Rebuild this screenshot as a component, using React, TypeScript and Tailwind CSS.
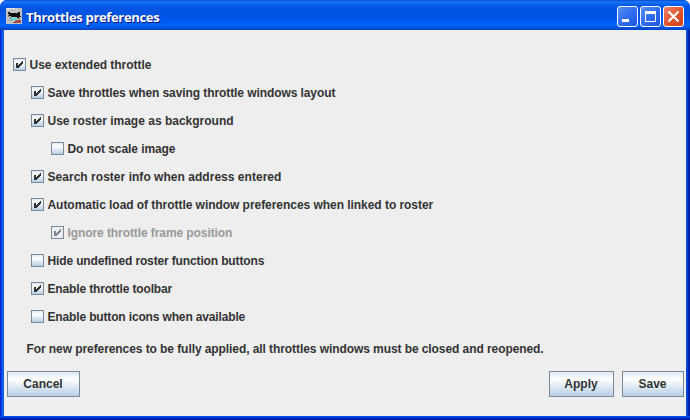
import React from "react";

type Option = {
  label: string;
  checked?: boolean;
  disabled?: boolean;
  indent: string;
  tracking: string;
};

const options: Option[] = [
  { label: "Use extended throttle", checked: true, indent: "pl-[9px]", tracking: "tracking-[-0.04px]" },
  { label: "Save throttles when saving throttle windows layout", checked: true, indent: "pl-[27px]", tracking: "tracking-[-0.085px]" },
  { label: "Use roster image as background", checked: true, indent: "pl-[27px]", tracking: "tracking-[0px]" },
  { label: "Do not scale image", indent: "pl-[47px]", tracking: "tracking-[-0.08px]" },
  { label: "Search roster info when address entered", checked: true, indent: "pl-[27px]", tracking: "tracking-[0.03px]" },
  { label: "Automatic load of throttle window preferences when linked to roster", checked: true, indent: "pl-[27px]", tracking: "tracking-[-0.045px]" },
  { label: "Ignore throttle frame position", checked: true, disabled: true, indent: "pl-[47px]", tracking: "tracking-[-0.085px]" },
  { label: "Hide undefined roster function buttons", indent: "pl-[27px]", tracking: "tracking-[-0.14px]" },
  { label: "Enable throttle toolbar", checked: true, indent: "pl-[27px]", tracking: "tracking-[-0.15px]" },
  { label: "Enable button icons when available", indent: "pl-[27px]", tracking: "tracking-[-0.15px]" },
];

function CheckBox({ checked, disabled }: { checked?: boolean; disabled?: boolean }) {
  return (
    <span
      className={`mt-[7px] block h-[13px] w-[13px] shrink-0 border border-[#7a8a99] ${
        disabled ? "bg-[#eeeeee]" : "bg-linear-to-b from-[#dde8f3] via-white via-30% to-[#b8cfe5]"
      }`}
    >
      {checked && (
        <svg viewBox="0 0 11 11" className="block h-[11px] w-[11px]" shapeRendering="crispEdges" fill={disabled ? "#7a8a99" : "#333333"}>
          <path d="M2 4h2v5H2zM4 6h1v3H4zM5 5h1v3H5zM6 4h1v3H6zM7 3h1v3H7zM8 2h1v3H8z" />
        </svg>
      )}
    </span>
  );
}

function OptionRow({ option }: { option: Option }) {
  return (
    <label className={`flex h-7 gap-[3.5px] ${option.indent}`}>
      <CheckBox checked={option.checked} disabled={option.disabled} />
      <span className={`leading-[28px] whitespace-nowrap ${option.tracking} ${option.disabled ? "text-[#999999]" : ""}`}>
        {option.label}
      </span>
    </label>
  );
}

function PushButton({ label, width }: { label: string; width: string }) {
  return (
    <button
      className={`h-[26px] border border-[#7a8a99] bg-linear-to-b from-[#dde8f3] via-white via-30% to-[#b8cfe5] pr-[1px] text-center leading-[24px] font-bold ${width}`}
    >
      {label}
    </button>
  );
}

function TrainIcon() {
  return (
    <svg viewBox="0 0 16 16" className="h-4 w-4 shrink-0" shapeRendering="crispEdges">
      <path fill="#c4c2c0" d="M0 0h16v16H0z" />
      <path fill="#f4f4f4" d="M1 0h2v2H1zM4 0h2v1H4zM7 0h2v1H7zM10 1h1v1h-1z" />
      <path fill="#111111" d="M2 4h2v1h8V4h2v4h1v1h-2v1h-2V9H5V8H3V6H2z" />
      <path fill="#666666" d="M2 7h1v2H2zM4 9h1v2H4zM12 10h2v1h-2z" />
      <path fill="#54dce4" d="M5 10h6v2H5z" />
      <path fill="#98a6a8" d="M2 12h5v1H2z" />
      <path fill="#b05a55" d="M9 12h6v3H7v-1h2z" />
      <path fill="#7d3030" d="M10 13h1v1h-1zM13 12h1v2h-1zM8 14h2v1H8z" />
    </svg>
  );
}

function WindowButton({ kind }: { kind: "minimize" | "maximize" | "close" }) {
  const fill =
    kind === "close"
      ? "bg-linear-to-br from-[#ec8468] via-[#e2552f] to-[#cc4218]"
      : "bg-linear-to-br from-[#5a8ff4] via-[#316ef0] to-[#1d55dc]";
  return (
    <button aria-label={kind} className={`h-[21px] w-[21px] rounded-[3px] border border-white ${fill}`}>
      <svg viewBox="0 0 19 19" className="block h-[19px] w-[19px]" fill="white">
        {kind === "minimize" && <path shapeRendering="crispEdges" d="M4 12h7v3H4z" />}
        {kind === "maximize" && <path shapeRendering="crispEdges" fillRule="evenodd" d="M4 4h11v11H4zM5 7v7h9V7z" />}
        {kind === "close" && <path d="M4.5 4.5l10 10M14.5 4.5l-10 10" stroke="white" strokeWidth="2.2" />}
      </svg>
    </button>
  );
}

export default function App() {
  return (
    <div className="h-[420px] w-[690px] overflow-hidden bg-white">
      <div className="flex h-full flex-col overflow-hidden rounded-t-[7px] bg-[#0831d9]">
        <header className="flex h-[30px] shrink-0 items-start bg-[linear-gradient(180deg,#0848cc_0px,#1a78fc_2px,#0a62f2_4px,#0055e5_7px,#0053e1_14px,#005aee_20px,#0062fa_25px,#0058e6_27px,#0042c4_30px)] pt-[6px] pr-[6px] pl-[6px]">
          <div className="pt-[2px]">
            <TrainIcon />
          </div>
          <h1 className="flex-1 pl-1 font-['Open_Sans',sans-serif] text-[13px] leading-[22px] font-bold tracking-[-0.33px] whitespace-nowrap text-white [text-shadow:1px_1px_0_#0a1883]">
            Throttles preferences
          </h1>
          <div className="flex gap-[2px]">
            <WindowButton kind="minimize" />
            <WindowButton kind="maximize" />
            <WindowButton kind="close" />
          </div>
        </header>
        <div className="flex-1 bg-[linear-gradient(90deg,#0019cf_0px,#0831d9_1px,#166aee_3px,#0855dd_4px,#0855dd_686px,#0046e0_687px,#0030c8_688px,#00138c_690px)] px-1">
          <main className="flex h-full flex-col bg-[#eeeeee] pt-[21px] font-['Liberation_Sans',Arial,sans-serif] text-[12px] font-bold text-[#333333]">
            {options.map((option) => (
              <OptionRow key={option.label} option={option} />
            ))}
            <p className="h-[40px] pt-[9px] pl-[22.5px] leading-[18px] tracking-[-0.077px] whitespace-nowrap">
              For new preferences to be fully applied, all throttles windows must be closed and reopened.
            </p>
            <footer className="flex gap-2 pr-[2px] pl-[3px]">
              <PushButton label="Cancel" width="mr-auto w-[73px]" />
              <PushButton label="Apply" width="w-[65px]" />
              <PushButton label="Save" width="w-[62px]" />
            </footer>
          </main>
        </div>
        <div className="h-1 shrink-0 bg-[linear-gradient(180deg,#0050ee_0px,#0044e0_1px,#0030c8_2px,#00138c_4px)]" />
      </div>
    </div>
  );
}
